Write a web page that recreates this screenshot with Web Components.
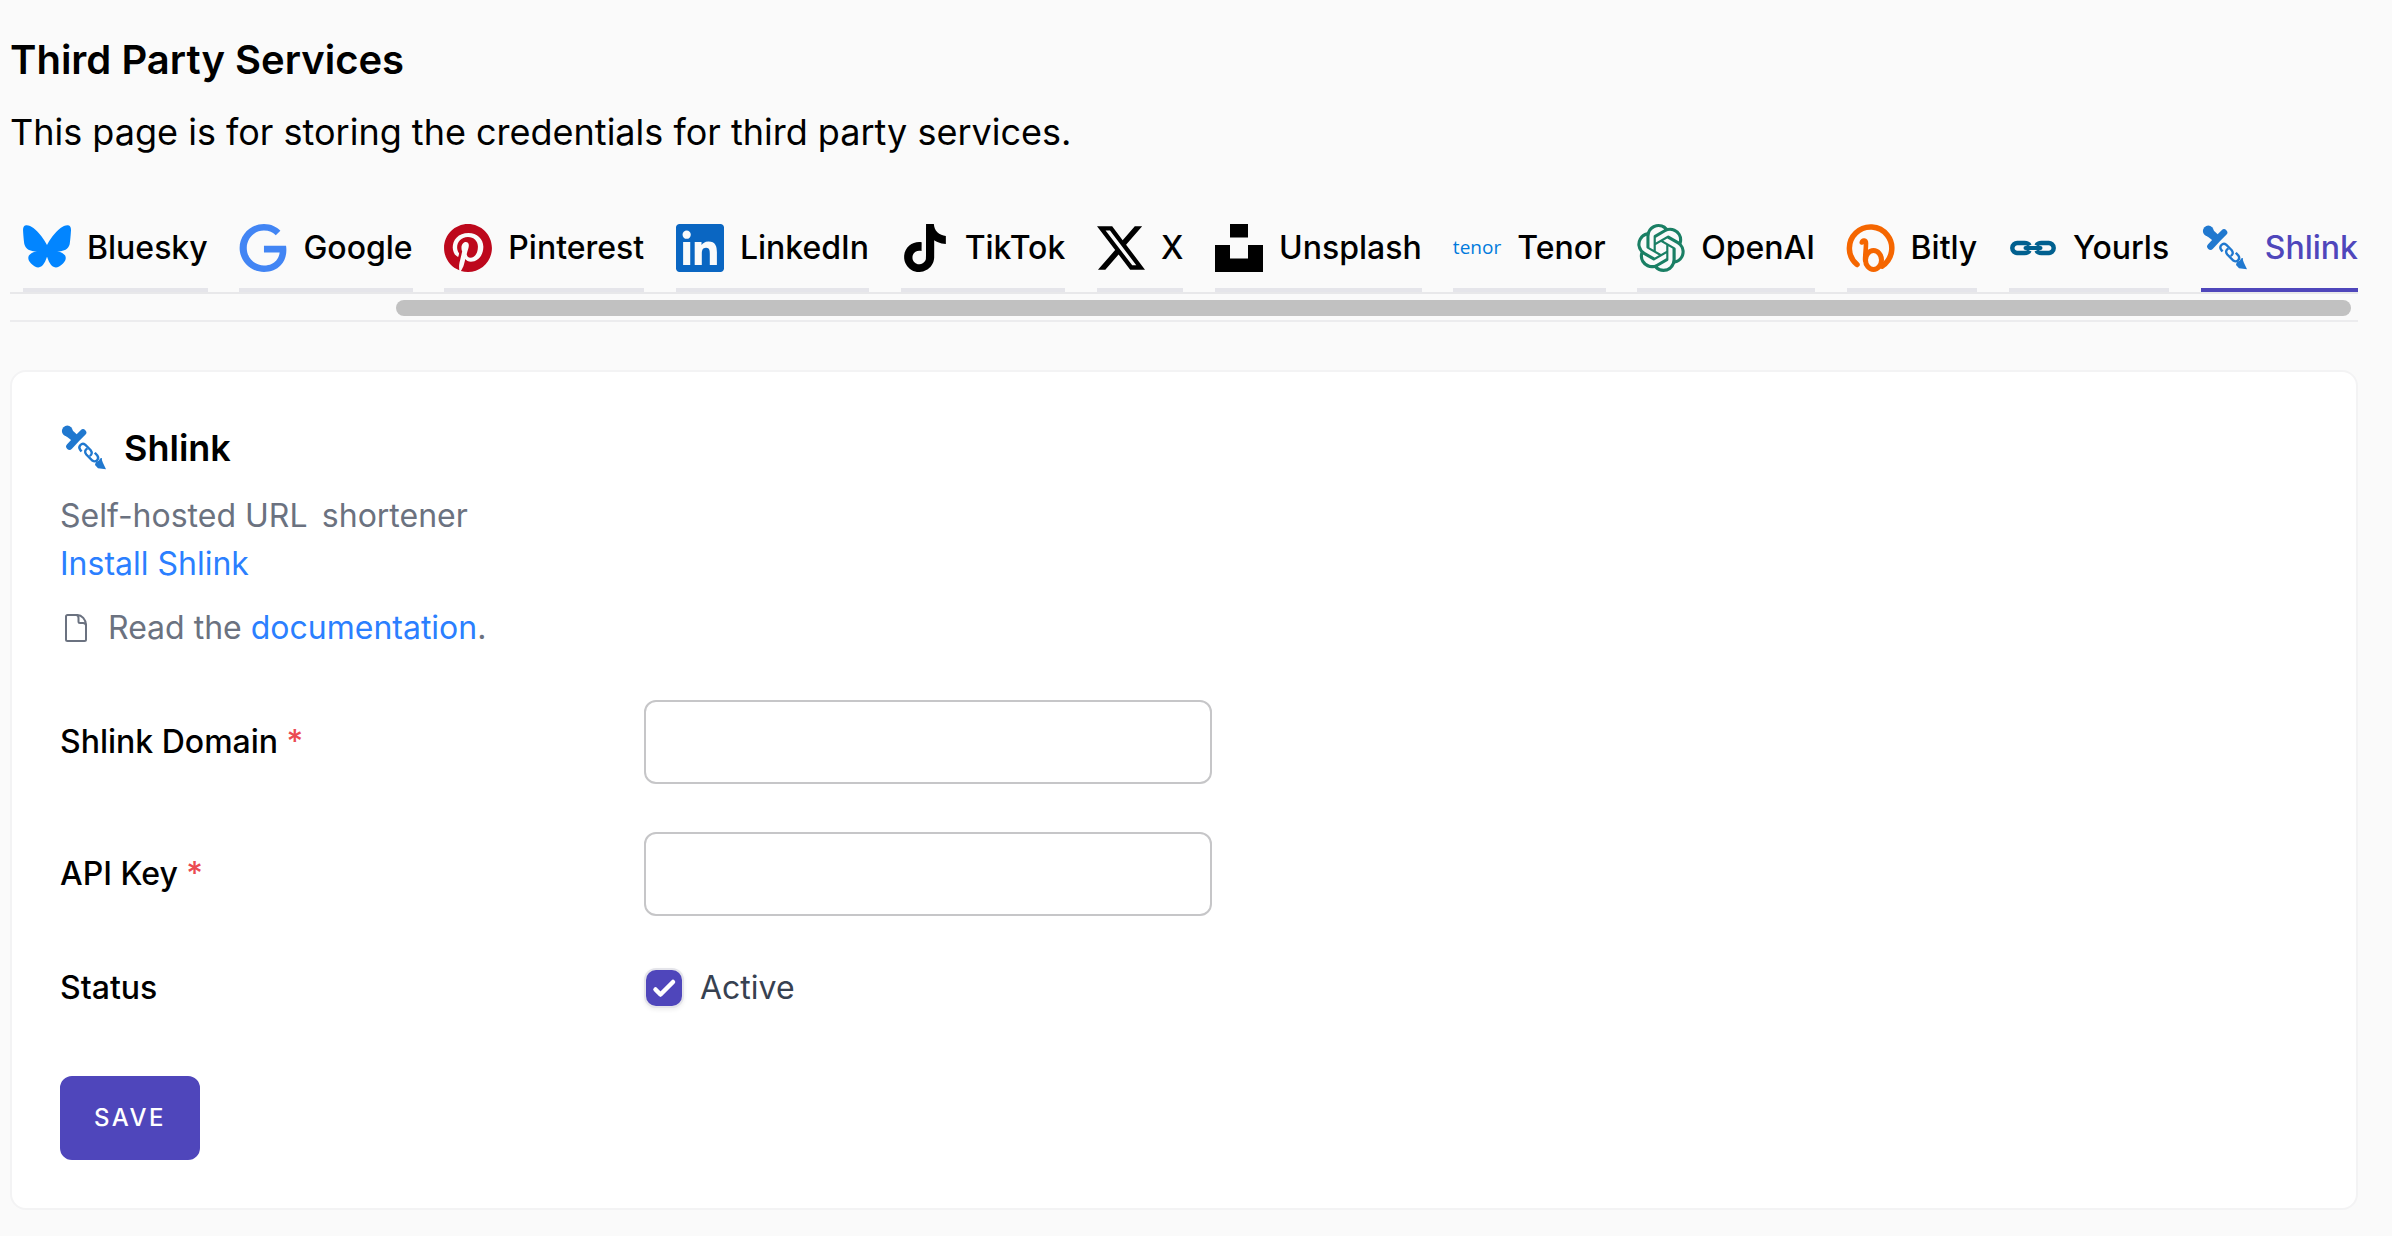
<!DOCTYPE html>
<html lang="en">
<head>
<meta charset="utf-8">
<title>Third Party Services</title>
<style>
  body { margin: 0; background: #fafafa; color: #000; font-family: Inter, "Liberation Sans", sans-serif; font-size: 32px; line-height: 48px; font-optical-sizing: none; }
</style>
</head>
<body>
<services-page></services-page>
<script>
const ICONS = {
  bluesky: `<svg viewBox="10 16 580 580"><path fill="#0285ff" d="M135.7 64.9C202.2 114.900 273.700 216.200 300 270.600c26.300-54.400 97.800-155.700 164.300-205.700C512.300 28.900 590 1.100 590 89.700c0 17.700-10.100 148.600-16.100 169.900-20.700 73.900-96 92.800-163.100 81.400 117.200 19.900 147 86 82.600 152.100-122.300 125.500-175.700-31.500-189.400-71.700-2.500-7.400-3.700-10.800-3.700-7.900 0-2.900-1.200.5-3.700 7.900-13.700 40.200-67.100 197.200-189.400 71.700-64.400-66.100-34.600-132.200 82.600-152.100-67.100 11.400-142.400-7.500-163.100-81.400C20.700 238.300 10.600 107.400 10.600 89.700c0-88.600 77.700-60.800 125.100-24.800z"/></svg>`,
  google: `<svg viewBox="0 0 24 24"><path fill="#4285f4" d="M12.480 10.920v3.280h7.840c-.24 1.840-.853 3.187-1.787 4.133-1.147 1.147-2.933 2.400-6.053 2.400-4.827 0-8.600-3.893-8.600-8.720s3.773-8.720 8.600-8.720c2.600 0 4.507 1.027 5.907 2.347l2.307-2.307C18.747 1.440 16.133 0 12.480 0 5.867 0 .307 5.387.307 12s5.560 12 12.173 12c3.573 0 6.267-1.173 8.373-3.360 2.160-2.160 2.840-5.213 2.840-7.667 0-.76-.053-1.467-.173-2.053H12.480z"/></svg>`,
  pinterest: `<svg viewBox="0 0 24 24"><path fill="#bd081c" d="M12.017 0C5.396 0 .029 5.367.029 11.987c0 5.079 3.158 9.417 7.618 11.162-.105-.949-.199-2.403.041-3.439.219-.937 1.406-5.957 1.406-5.957s-.359-.72-.359-1.781c0-1.663.967-2.911 2.168-2.911 1.024 0 1.518.769 1.518 1.688 0 1.029-.653 2.567-.992 3.992-.285 1.193.6 2.165 1.775 2.165 2.128 0 3.768-2.245 3.768-5.487 0-2.861-2.063-4.869-5.008-4.869-3.410 0-5.409 2.562-5.409 5.199 0 1.033.394 2.143.889 2.741.099.12.112.225.085.345-.09.375-.293 1.199-.334 1.363-.053.225-.172.271-.401.165-1.495-.69-2.433-2.878-2.433-4.646 0-3.776 2.748-7.252 7.920-7.252 4.158 0 7.392 2.967 7.392 6.923 0 4.135-2.607 7.462-6.233 7.462-1.214 0-2.354-.629-2.758-1.379l-.749 2.848c-.269 1.045-1.004 2.352-1.498 3.146 1.123.345 2.306.535 3.550.535 6.607 0 11.985-5.365 11.985-11.987C23.970 5.390 18.592.026 11.985.026L12.017 0z"/></svg>`,
  linkedin: `<svg viewBox="0 0 24 24"><path fill="#0a66c2" d="M20.447 20.452h-3.554v-5.569c0-1.328-.027-3.037-1.852-3.037-1.853 0-2.136 1.445-2.136 2.939v5.667H9.351V9h3.414v1.561h.046c.477-.9 1.637-1.850 3.370-1.850 3.601 0 4.267 2.370 4.267 5.455v6.286zM5.337 7.433a2.062 2.062 0 0 1-2.063-2.065 2.064 2.064 0 1 1 2.063 2.065zm1.782 13.019H3.555V9h3.564v11.452zM22.225 0H1.771C.792 0 0 .774 0 1.729v20.542C0 23.227.792 24 1.771 24h20.451C23.200 24 24 23.227 24 22.271V1.729C24 .774 23.200 0 22.222 0h.003z"/></svg>`,
  tiktok: `<svg viewBox="0 0 24 24"><path d="M12.525.02c1.310-.02 2.610-.01 3.910-.02.08 1.530.63 3.090 1.750 4.170 1.120 1.110 2.700 1.620 4.240 1.790v4.030c-1.440-.05-2.890-.35-4.200-.97-.57-.26-1.100-.59-1.620-.93-.01 2.920.01 5.840-.02 8.750-.08 1.400-.54 2.790-1.350 3.940-1.310 1.920-3.580 3.170-5.910 3.210-1.430.08-2.860-.31-4.080-1.030-2.020-1.190-3.440-3.370-3.650-5.710-.02-.5-.03-1-.01-1.490.18-1.900 1.120-3.720 2.580-4.960 1.660-1.440 3.980-2.130 6.150-1.720.02 1.480-.04 2.960-.04 4.440-.99-.32-2.150-.23-3.020.37-.63.41-1.110 1.040-1.360 1.750-.21.51-.15 1.070-.14 1.610.24 1.640 1.820 3.020 3.500 2.870 1.120-.01 2.190-.66 2.770-1.610.19-.33.4-.67.41-1.060.1-1.790.06-3.570.07-5.360.01-4.030-.01-8.050.02-12.070z"/></svg>`,
  x: `<svg viewBox="0 0 24 24"><path d="M18.901 1.153h3.680l-8.040 9.190L24 22.846h-7.406l-5.800-7.584-6.638 7.584H.474l8.600-9.830L0 1.154h7.594l5.243 6.932ZM17.610 20.644h2.039L6.486 3.240H4.298Z"/></svg>`,
  unsplash: `<svg viewBox="0 0 24 24"><path d="M7.500 6.750V0h9v6.750h-9zm9 3.750H24V24H0V10.500h7.500v6.750h9V10.500z"/></svg>`,
  openai: `<svg viewBox="0 0 24 24"><path fill="#1a7f64" d="M22.2819 9.8211a5.9847 5.9847 0 0 0-.5157-4.9108 6.0462 6.0462 0 0 0-6.5098-2.9A6.0651 6.0651 0 0 0 4.9807 4.1818a5.9847 5.9847 0 0 0-3.9977 2.9 6.0462 6.0462 0 0 0 .7427 7.0966 5.98 5.98 0 0 0 .511 4.9107 6.051 6.051 0 0 0 6.5146 2.9001A5.9847 5.9847 0 0 0 13.2599 24a6.0557 6.0557 0 0 0 5.7718-4.2058 5.9894 5.9894 0 0 0 3.9977-2.9001 6.0557 6.0557 0 0 0-.7475-7.0729zm-9.022 12.6081a4.4755 4.4755 0 0 1-2.8764-1.0408l.1419-.0804 4.7783-2.7582a.7948.7948 0 0 0 .3927-.6813v-6.7369l2.02 1.1686a.071.071 0 0 1 .038.0520v5.5826a4.504 4.504 0 0 1-4.4945 4.4944zm-9.6607-4.1254a4.4708 4.4708 0 0 1-.5346-3.0137l.142.0852 4.783 2.7582a.7712.7712 0 0 0 .7806 0l5.8428-3.3685v2.3324a.0804.0804 0 0 1-.0332.0615L9.74 19.9502a4.4992 4.4992 0 0 1-6.1408-1.6464zM2.3408 7.8956a4.485 4.485 0 0 1 2.3655-1.9728V11.6a.7664.7664 0 0 0 .3879.6765l5.8144 3.3543-2.0201 1.1685a.0757.0757 0 0 1-.071 0l-4.8303-2.7865A4.504 4.504 0 0 1 2.3408 7.8720zm16.5963 3.8558L13.1038 8.364 15.1192 7.2a.0757.0757 0 0 1 .071 0l4.8303 2.7913a4.4944 4.4944 0 0 1-.6765 8.1042v-5.6772a.79.79 0 0 0-.407-.667zm2.0107-3.0231l-.142-.0852-4.7735-2.7818a.7759.7759 0 0 0-.7854 0L9.409 9.2297V6.8974a.0662.0662 0 0 1 .0284-.0615l4.8303-2.7866a4.4992 4.4992 0 0 1 6.6802 4.66zM8.3065 12.863l-2.02-1.1638a.0804.0804 0 0 1-.038-.0567V6.0742a4.4992 4.4992 0 0 1 7.3757-3.4537l-.142.0805L8.704 5.459a.7948.7948 0 0 0-.3927.6813zm1.0976-2.3654l2.602-1.4998 2.6069 1.4998v2.9994l-2.5974 1.4997-2.6067-1.4997Z"/></svg>`,
  bitly: `<svg viewBox="0 0 48 48" fill="none" stroke="#f56600" stroke-linecap="round" stroke-linejoin="round"><path stroke-width="5.500" d="M10 40.500A21.200 21.200 0 1 1 35 42.100"/><path stroke-width="4.600" d="M14.800 18.500c.8-2.800 4.200-2.500 4.200.8 0 6-.9 11-.9 17"/><ellipse cx="26.500" cy="36" rx="8" ry="9.500" stroke-width="5"/></svg>`,
  yourls: `<svg viewBox="0 0 48 48" fill="none" stroke="#01608f" stroke-width="4.500"><path d="M20.500 21.500C19.500 19.500 18 19 15.500 19H9a5 5 0 0 0-5.700 5A5 5 0 0 0 9 29h6.500c2.500 0 4-.5 5-2.500M27.500 21.500c1-2 2.500-2.500 5-2.500H39a5 5 0 0 1 5.700 5A5 5 0 0 1 39 29h-6.500c-2.500 0-4-.5-5-2.500"/><path stroke-width="4" stroke-linecap="round" d="M16.500 24h15"/></svg>`,
  shlink: `<svg viewBox="0 0 48 48"><g fill="#2078cf"><circle cx="7.300" cy="7" r="5.400"/><path d="M4 10.500 11 5l7 6.500-5 6z"/><path d="M35 41c.3-2 .8-3 2-3.500 1.500-.5 2-1 2.500-2 .4-1 1.200-1.500 2.300-1.500 0 1.500.2 3 1 4.500l3.200 6.800-8-1z"/></g><path d="M23 8.500 16.500 15l-7 7.500" fill="none" stroke="#2078cf" stroke-width="6.600" stroke-linecap="round"/><g fill="none" stroke="#2078cf" stroke-width="2.400"><path d="M21.500 27.500l-1.300-1.800c-2.500-3.300 1.500-7.500 5-5l5.500 5.500c2 2.500.8 5-1.200 5.800"/><path d="M27.500 24.500c-2.500 1-3.200 3.500-1.200 6l6 6c3.500 2.500 7.500-1.500 5-5l-2.500-2.800"/></g></svg>`,
  tenor: `<svg viewBox="0 0 48 48"><text x="24" y="30" text-anchor="middle" font-family="Open Sans, sans-serif" font-size="19" fill="#007add">tenor</text></svg>`,
  file: `<svg viewBox="0 0 32 32" fill="none" stroke="#6b7280" stroke-width="2" stroke-linejoin="round"><path d="M17.500 3H7.500A1.500 1.500 0 0 0 6 4.500v23A1.500 1.500 0 0 0 7.500 29h17a1.500 1.500 0 0 0 1.500-1.500V13C26 7.500 21.500 3 17.500 3z"/><path d="M16 3c2 0 2.500 1.500 2.500 3v3.500A1.500 1.500 0 0 0 20 11h3c2 0 3 1 3 2.500"/></svg>`
};
const define = (name, markup) => {
  customElements.define(name, class extends HTMLElement {
    connectedCallback() {
      if (this.shadowRoot) return;
      this.attachShadow({ mode: 'open' }).innerHTML = typeof markup === 'function' ? markup(this) : markup;
    }
  });
};

define('brand-icon', el => `
  <style>:host{display:block;flex:none;width:48px;height:48px}:host([name=file]){width:32px;height:32px}svg{display:block;width:100%;height:100%;overflow:visible}</style>
  ${ICONS[el.getAttribute('name')]}`);

define('service-tab', el => `
  <style>
    :host{display:block;flex:none}
    a{display:flex;align-items:center;gap:16px;padding-bottom:16px;border-bottom:4px solid #e5e5ea;color:#000;text-decoration:none;font-weight:500;line-height:48px;white-space:nowrap}
    :host([active]) a{color:#4f46bb;border-color:#4f46bb}
  </style>
  <a href="#${el.getAttribute('icon')}"><brand-icon name="${el.getAttribute('icon')}"></brand-icon><span><slot></slot></span></a>`);

define('service-tabs', `
  <style>
    :host{display:block;border-bottom:2px solid #ececee}
    nav{display:flex;justify-content:space-between;gap:16px;padding-left:13px;border-bottom:2px solid #e8e8ea}
    .track{display:flex;justify-content:flex-end;padding:6px 7px 4px 0}
    .thumb{width:83.5%;height:16px;border-radius:8px;background:#c1c1c1}
  </style>
  <nav aria-label="Services"><slot></slot></nav>
  <div class="track"><div class="thumb"></div></div>`);

define('service-card', `
  <style>
    :host{display:block;box-sizing:border-box;background:#fff;border:2px solid #f3f3f4;border-radius:16px;padding:52px 48px 48px}
    header{display:flex;align-items:center;gap:16px}
    h2{margin:0;font-size:36px;line-height:48px;font-weight:600}
  </style>
  <header><slot name="icon"></slot><h2><slot name="title"></slot></h2></header>
  <slot></slot>`);

define('service-about', `
  <style>
    :host{display:block;margin-top:20px;color:#6b7280}
    p{margin:0}
    .docs{display:flex;align-items:center;gap:16px;margin-top:16px}
    a{color:#2b7fff;text-decoration:none}
  </style>
  <p>Self-hosted URL&#8198; shortener</p>
  <p><a href="#install">Install Shlink</a></p>
  <p class="docs"><brand-icon name="file"></brand-icon><span>Read the <a href="#docs">documentation</a>.</span></p>`);

const ROW = `:host{display:grid;grid-template-columns:584fr 568fr 1096fr;align-items:center}.name{font-weight:500}`;

define('text-field', el => `
  <style>
    ${ROW}
    i{font-style:normal;color:#eb4b52}
    input{box-sizing:border-box;width:100%;height:84px;padding:0 24px;margin:0;border:2px solid #c6c6c8;border-radius:12px;background:#fff;font:inherit;color:inherit;outline:none}
  </style>
  <label class="name" for="field">${el.getAttribute('label')} <i>*</i></label>
  <input id="field" type="${el.getAttribute('type') || 'text'}" required>`);

define('status-field', `
  <style>
    ${ROW}
    .choice{display:flex;align-items:center;gap:18px;padding-left:2px;color:#374151}
    .box{display:grid;width:36px;height:36px}
    .box>*{grid-area:1/1}
    input{appearance:none;width:36px;height:36px;margin:0;border-radius:10px;background:#fff;box-shadow:0 0 0 2px #e4e4ea,0 2px 4px 2px #0001}
    input:checked{background:#4f46bb}
    svg{width:36px;height:36px;pointer-events:none}
  </style>
  <span class="name">Status</span>
  <label class="choice"><span class="box"><input type="checkbox" checked><svg viewBox="0 0 36 36" fill="none" stroke="#fff" stroke-width="4.500" stroke-linecap="round" stroke-linejoin="round"><path d="M9.500 19.500l5 5L27 12"/></svg></span><span>Active</span></label>`);

define('save-button', `
  <style>
    :host{display:block}
    button{box-sizing:border-box;height:84px;padding:0 32px;border:2px solid #4f46bb;border-radius:12px;background:#4f46bb;color:#fff;font:500 24px/32px Inter,sans-serif;font-optical-sizing:none;letter-spacing:.1em;text-transform:uppercase}
  </style>
  <button type="submit"><slot></slot></button>`);

define('services-page', `
  <style>
    :host{display:block;padding:32px 34px 26px 10px}
    h1{margin:0;font-size:40px;line-height:56px;font-weight:600}
    .lead{margin:16px 0 64px;font-size:36px;line-height:56px}
    service-card{margin-top:48px}
    form{display:grid;gap:48px;margin-top:48px}
    save-button{margin-top:16px}
  </style>
  <h1>Third Party Services</h1>
  <p class="lead">This page is for storing the credentials for third party services.</p>
  <service-tabs>
    <service-tab icon="bluesky">Bluesky</service-tab>
    <service-tab icon="google">Google</service-tab>
    <service-tab icon="pinterest">Pinterest</service-tab>
    <service-tab icon="linkedin">LinkedIn</service-tab>
    <service-tab icon="tiktok">TikTok</service-tab>
    <service-tab icon="x">X</service-tab>
    <service-tab icon="unsplash">Unsplash</service-tab>
    <service-tab icon="tenor">Tenor</service-tab>
    <service-tab icon="openai">OpenAI</service-tab>
    <service-tab icon="bitly">Bitly</service-tab>
    <service-tab icon="yourls">Yourls</service-tab>
    <service-tab icon="shlink" active>Shlink</service-tab>
  </service-tabs>
  <service-card>
    <brand-icon slot="icon" name="shlink"></brand-icon>
    <span slot="title">Shlink</span>
    <service-about></service-about>
    <form>
      <text-field label="Shlink Domain"></text-field>
      <text-field label="API Key"></text-field>
      <status-field></status-field>
      <save-button>Save</save-button>
    </form>
  </service-card>`);
</script>
</body>
</html>
